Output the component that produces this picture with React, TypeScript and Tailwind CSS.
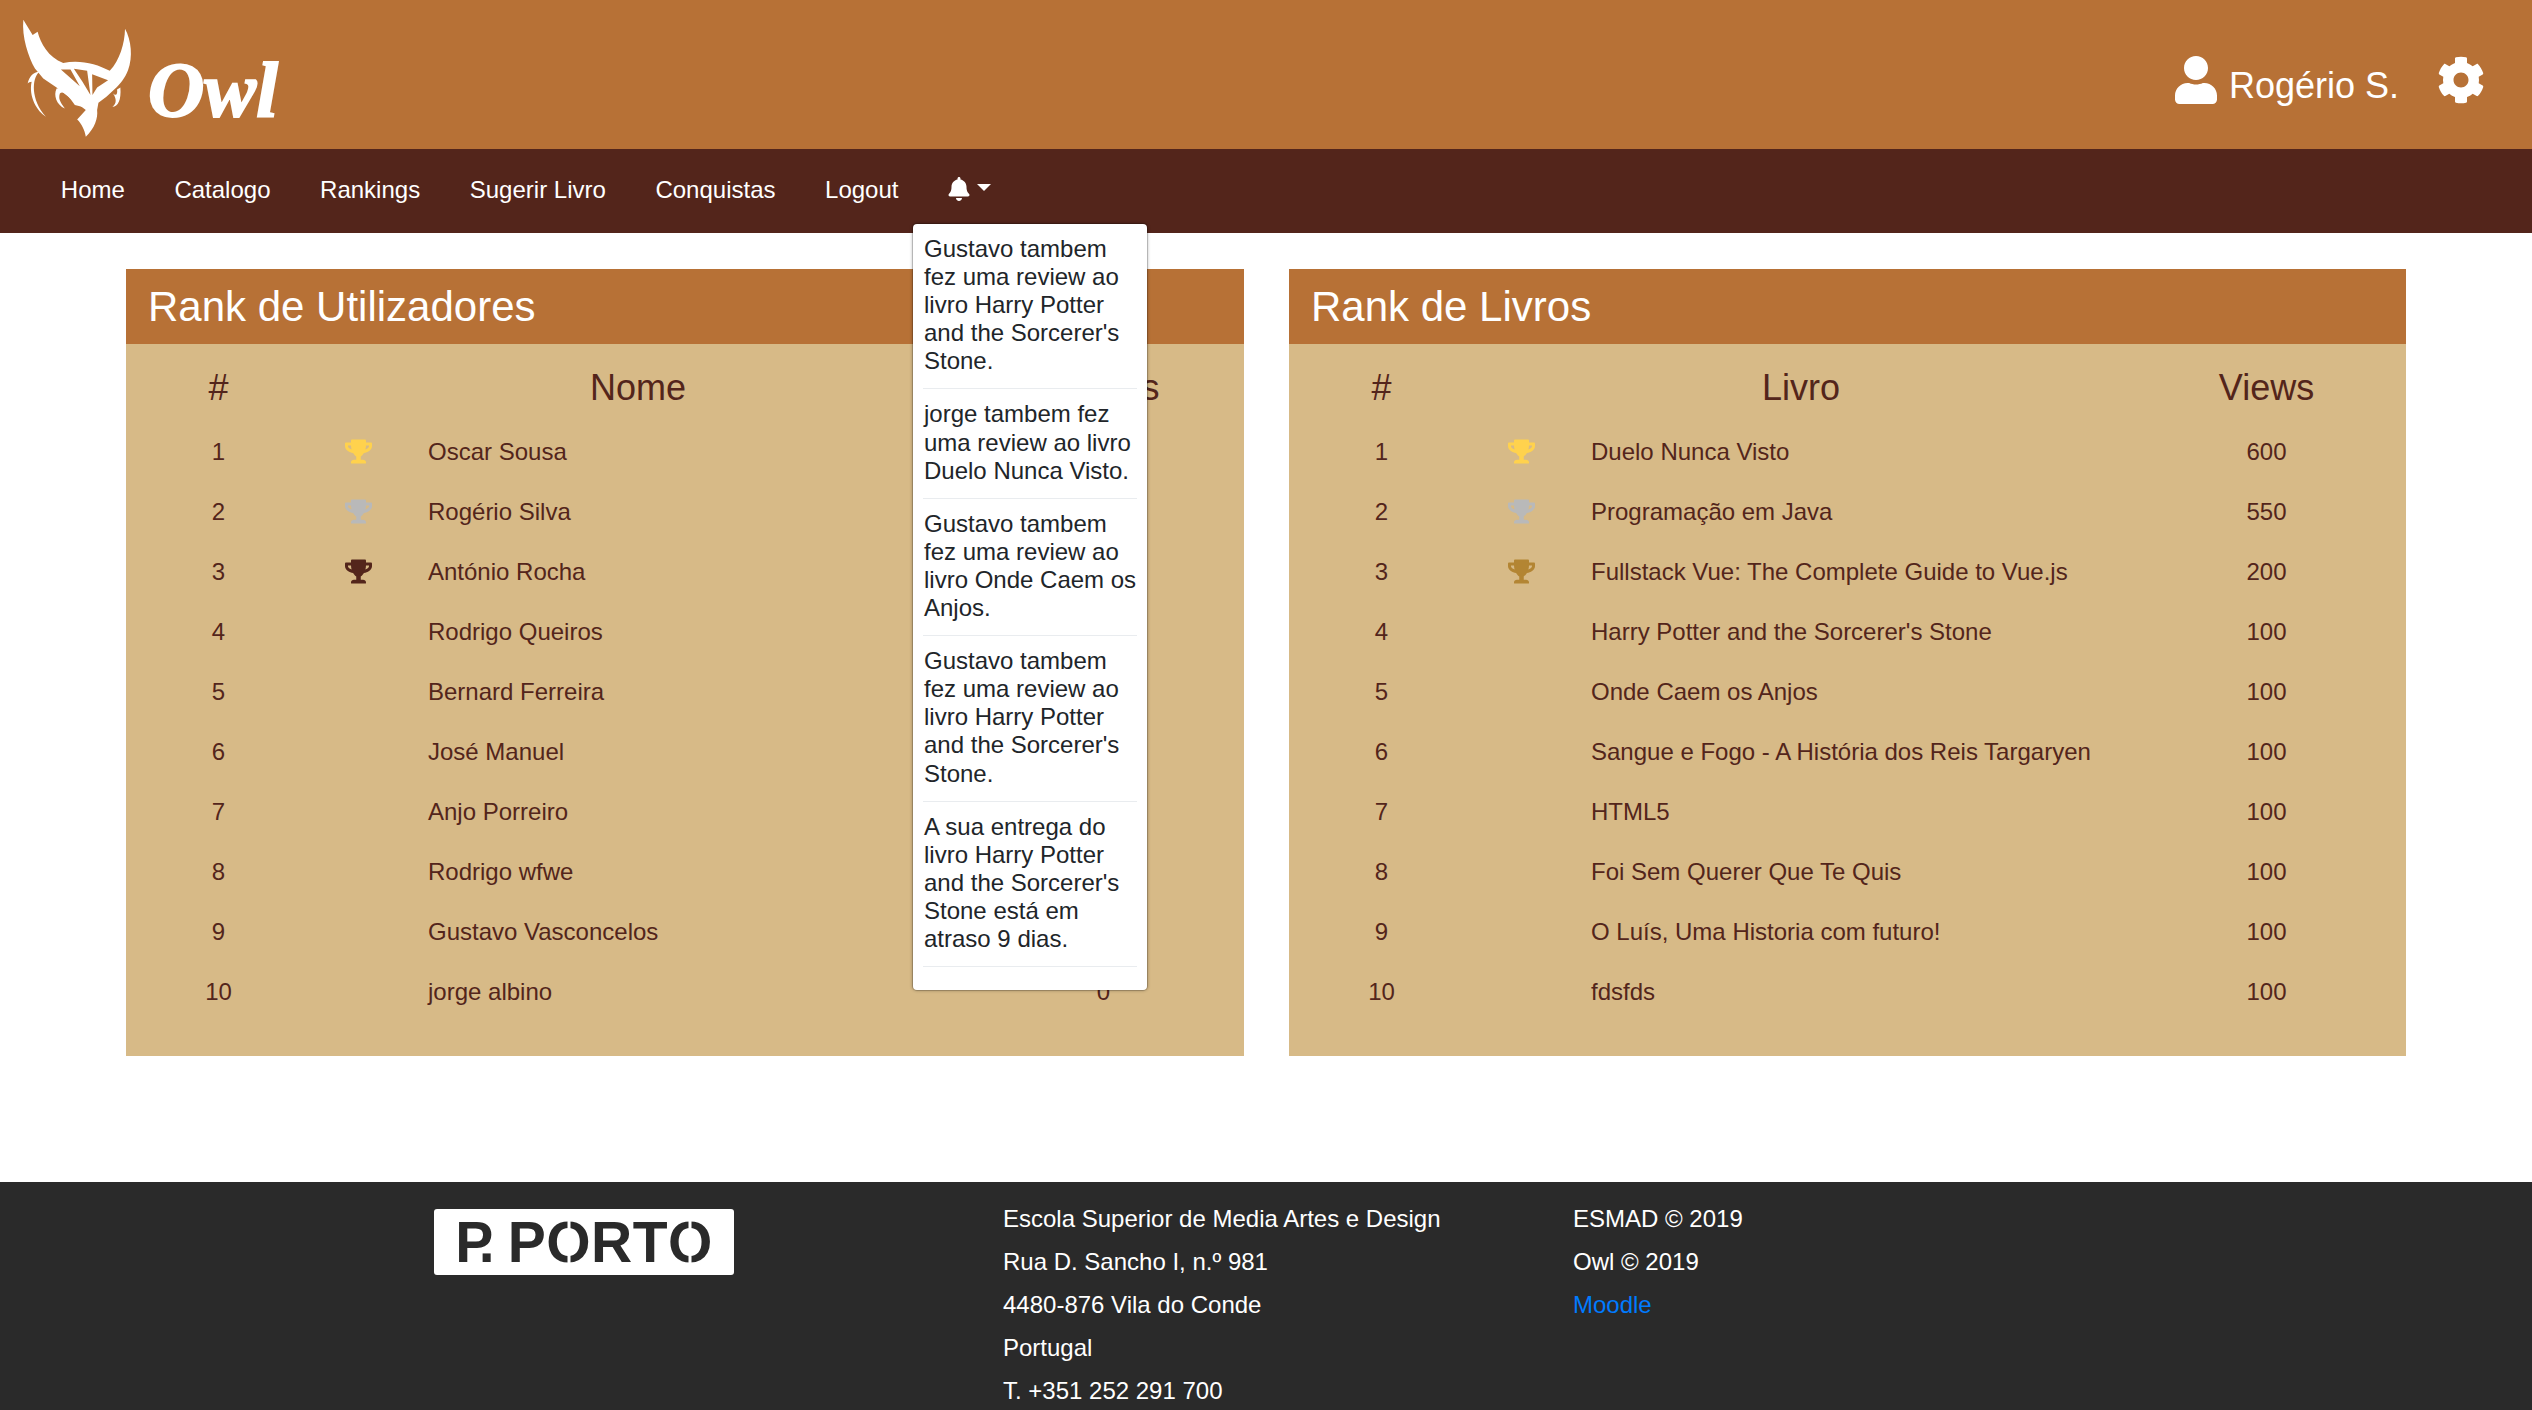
import { FaBell, FaCog, FaTrophy, FaUser } from "react-icons/fa";

const navLinks = ["Home", "Catalogo", "Rankings", "Sugerir Livro", "Conquistas", "Logout"];

const notifications = [
  "Gustavo tambem fez uma review ao livro Harry Potter and the Sorcerer's Stone.",
  "jorge tambem fez uma review ao livro Duelo Nunca Visto.",
  "Gustavo tambem fez uma review ao livro Onde Caem os Anjos.",
  "Gustavo tambem fez uma review ao livro Harry Potter and the Sorcerer's Stone.",
  "A sua entrega do livro Harry Potter and the Sorcerer's Stone está em atraso 9 dias.",
];

const users = [
  ["Oscar Sousa", "0"],
  ["Rogério Silva", "0"],
  ["António Rocha", "0"],
  ["Rodrigo Queiros", "0"],
  ["Bernard Ferreira", "0"],
  ["José Manuel", "0"],
  ["Anjo Porreiro", "0"],
  ["Rodrigo wfwe", "0"],
  ["Gustavo Vasconcelos", "0"],
  ["jorge albino", "0"],
];

const books = [
  ["Duelo Nunca Visto", "600"],
  ["Programação em Java", "550"],
  ["Fullstack Vue: The Complete Guide to Vue.js", "200"],
  ["Harry Potter and the Sorcerer's Stone", "100"],
  ["Onde Caem os Anjos", "100"],
  ["Sangue e Fogo - A História dos Reis Targaryen", "100"],
  ["HTML5", "100"],
  ["Foi Sem Querer Que Te Quis", "100"],
  ["O Luís, Uma Historia com futuro!", "100"],
  ["fdsfds", "100"],
];

function OwlLogo() {
  return (
    <svg viewBox="60 50 340 370" className="h-[123px] w-[113px] shrink-0">
      <path
        fill="#fff"
        d="M70 58 L98 104 L113 94 C122 130 145 170 190 188 C240 178 290 190 330 212 C360 180 375 130 376 85 C395 120 400 170 385 210 C375 235 362 250 350 262 L320 290 L296 308 L292 330 C295 355 285 385 258 410 C255 390 245 370 232 358 L258 330 L225 305 L170 262 L130 235 L105 205 C85 170 65 110 70 58 Z"
      />
      <path fill="#b77136" d="M183 208 L212 208 L240 258 Z M222 206 L262 212 L272 285 L248 245 Z M277 222 L325 240 L292 262 L278 285 Z" />
      <path fill="#fff" d="M118 215 C95 235 92 300 138 350 C112 335 85 290 95 245 C90 245 86 248 83 250 C88 230 100 215 118 215 Z" />
      <path fill="#fff" d="M170 265 C160 285 170 315 195 325 C180 305 175 295 180 280 C190 270 205 285 225 315 L255 322 L200 262 Z" />
      <path fill="#fff" d="M340 280 C350 295 352 310 338 320 C355 320 365 300 362 262 L352 268 C354 280 350 290 340 280 Z" />
    </svg>
  );
}

// the O of the P.PORTO logo is a stencil: a thin cut runs through it
function StencilO() {
  return (
    <span className="relative inline-block">
      O
      <span className="absolute inset-y-0 left-1/2 w-[3px] -translate-x-1/2 bg-white" />
    </span>
  );
}

function RankTable({
  title,
  heading,
  valueHeading,
  rows,
  bronze,
  width,
}: {
  title: string;
  heading: string;
  valueHeading: string;
  rows: string[][];
  bronze: string;
  width: string;
}) {
  const trophies = ["text-[#ffd24d]", "text-[#b9b9b9]", bronze];

  return (
    <section className={`${width} bg-[#d7ba87] text-[#53251b]`}>
      <h2 className="h-[75px] bg-[#b77136] pl-[22px] text-[42px] leading-[75px] text-white">{title}</h2>
      <div className="pt-[10px] pb-[34px]">
        <div className="grid h-[68px] grid-cols-[185px_95px_442px_396px] items-center text-center text-[36px]">
          <div>#</div>
          <div />
          <div className="pl-[22px]">{heading}</div>
          <div className="pl-[115px]">{valueHeading}</div>
        </div>
        {rows.map(([name, value], i) => (
          <div key={name} className="grid h-[60px] grid-cols-[185px_95px_442px_396px] items-center text-[24px]">
            <div className="text-center">{i + 1}</div>
            <div className="flex justify-center">
              {i < 3 && <FaTrophy className={`mb-[2px] text-[27px] ${trophies[i]}`} />}
            </div>
            <div className="pl-[22px] whitespace-nowrap">{name}</div>
            <div className="pl-[115px] text-center">{value}</div>
          </div>
        ))}
      </div>
    </section>
  );
}

export default function App() {
  return (
    <div className="flex h-screen flex-col overflow-hidden bg-white font-['Liberation_Sans',Arial,sans-serif]">
      {/* Header */}
      <header className="flex h-[149px] shrink-0 items-start justify-between bg-[#b77136] text-white">
        <div className="flex items-start pl-[20px] pt-[17px]">
          <OwlLogo />
          <span className="mt-[31px] ml-[15px] font-['Liberation_Serif',serif] text-[78px] leading-[84px] font-bold italic [-webkit-text-stroke:2px_white]">
            Owl
          </span>
        </div>
        <div className="flex items-start pt-[56px] pr-[47px]">
          <FaUser className="text-[48px]" />
          <span className="mt-[2px] ml-[9px] text-[36px] leading-[56px]">Rogério S.</span>
          <FaCog className="ml-[38px] text-[48px]" />
        </div>
      </header>

      {/* Nav */}
      <nav className="relative flex h-[84px] shrink-0 items-center bg-[#53251b] pl-[36px] text-[24px] text-white">
        {navLinks.map((link) => (
          <a key={link} className="mb-[2px] px-[24.8px]">
            {link}
          </a>
        ))}
        <div className="ml-[24px] flex items-center pb-[4px]">
          <FaBell className="text-[24px]" />
          <span className="ml-[6px] mb-[4px] border-x-[7px] border-t-[7px] border-x-transparent border-t-white" />
        </div>
        <div className="absolute top-[74px] left-[912px] z-10 w-[236px] rounded-[5px] border border-black/15 bg-white bg-clip-padding px-[10px] pt-[11px] pb-[12px] text-[24px] leading-[28.1px] text-[#212529] shadow-[0_0_3px_rgba(0,0,0,0.25)]">
          {notifications.map((text, i) => (
            <div key={i} className="mb-[11px] border-b border-[#e9ecef] pb-[13px]">
              <p className="pl-[1px]">{text}</p>
            </div>
          ))}
        </div>
      </nav>

      {/* Rankings */}
      <main className="flex shrink-0 gap-[45px] pt-[36px] pb-[126px] pl-[126px]">
        <RankTable title="Rank de Utilizadores" heading="Nome" valueHeading="Pontos" rows={users} bronze="text-[#53251b]" width="w-[1118px]" />
        <RankTable title="Rank de Livros" heading="Livro" valueHeading="Views" rows={books} bronze="text-[#b38533]" width="w-[1117px]" />
      </main>

      {/* Footer */}
      <footer className="grid shrink-0 grid-cols-[569px_570px_1fr] bg-[#2a2a2a] pt-[15px] pb-[20px] pl-[434px] text-[24px] leading-[43px] text-white">
        <div className="pt-[12px]">
          <div className="flex h-[66px] w-[300px] items-center justify-center rounded-[3px] bg-white text-[57px] leading-none font-bold text-[#2a2a2a]">
            <span className="tracking-[-7px]">P.</span>
            <span className="ml-[20px] tracking-[0.5px]">
              P<StencilO />
              RT
              <StencilO />
            </span>
          </div>
        </div>
        <div>
          <div>Escola Superior de Media Artes e Design</div>
          <div>Rua D. Sancho I, n.º 981</div>
          <div>4480-876 Vila do Conde</div>
          <div>Portugal</div>
          <div>T. +351 252 291 700</div>
        </div>
        <div>
          <div>ESMAD © 2019</div>
          <div>Owl © 2019</div>
          <a className="text-[#007bff]">Moodle</a>
        </div>
      </footer>
    </div>
  );
}
